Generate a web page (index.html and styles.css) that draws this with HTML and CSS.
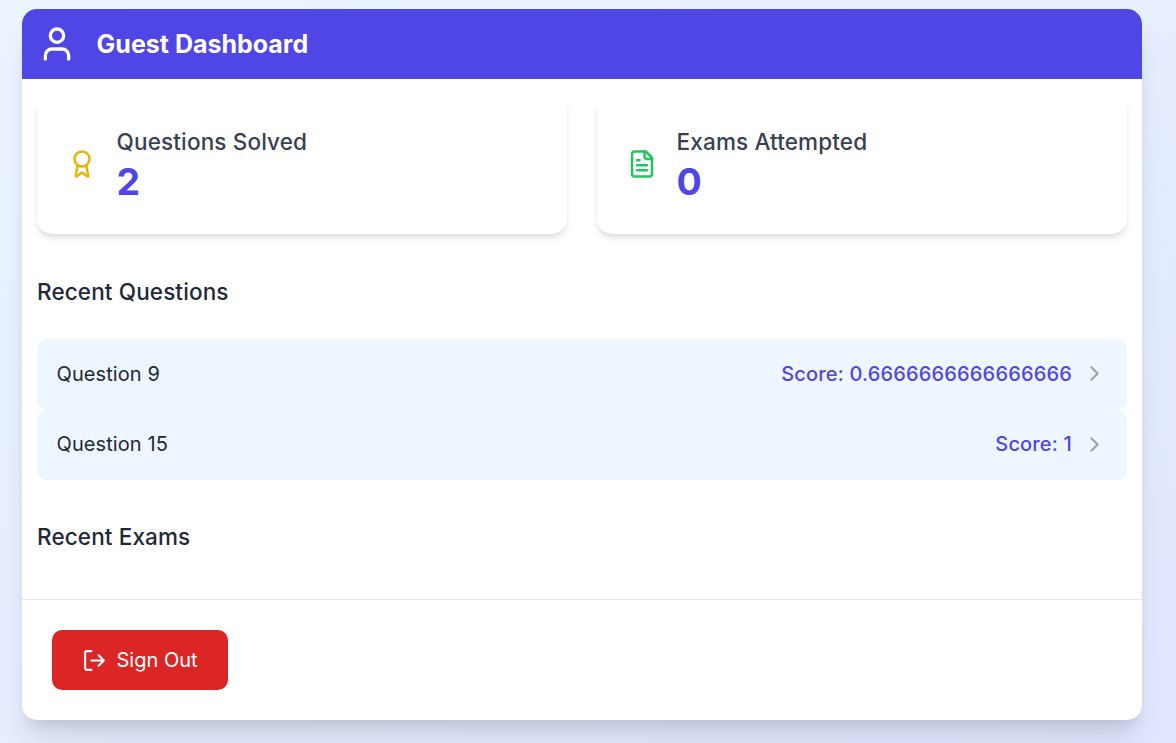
FILE: index.html
```html
<!DOCTYPE html>
<html lang="en">
<head>
<meta charset="utf-8">
<title>Guest Dashboard</title>
<link rel="stylesheet" href="styles.css">
</head>
<body>
<main class="panel">
  <header class="panel-header">
    <svg class="icon icon-user" viewBox="0 0 24 24"><path d="M19 21v-2a4 4 0 0 0-4-4H9a4 4 0 0 0-4 4v2"/><circle cx="12" cy="7" r="4"/></svg>
    <h1 class="title">Guest Dashboard</h1>
  </header>
  <div class="content">
    <section class="stats">
      <div class="stat">
        <svg class="icon icon-award" viewBox="0 0 24 24"><path d="m15.477 12.89 1.515 8.526a.5.5 0 0 1-.81.47l-3.58-2.687a1 1 0 0 0-1.197 0l-3.586 2.686a.5.5 0 0 1-.81-.469l1.514-8.526"/><circle cx="12" cy="8" r="6"/></svg>
        <div>
          <p class="stat-label">Questions Solved</p>
          <p class="stat-value">2</p>
        </div>
      </div>
      <div class="stat">
        <svg class="icon icon-file" viewBox="0 0 24 24"><path d="M15 2H6a2 2 0 0 0-2 2v16a2 2 0 0 0 2 2h12a2 2 0 0 0 2-2V7Z"/><path d="M14 2v4a2 2 0 0 0 2 2h4M10 9H8M16 13H8M16 17H8"/></svg>
        <div>
          <p class="stat-label">Exams Attempted</p>
          <p class="stat-value">0</p>
        </div>
      </div>
    </section>
    <section class="recent">
      <h2 class="section-title">Recent Questions</h2>
      <ul class="list">
        <li class="row">
          <span>Question 9</span>
          <span class="row-end"><span class="score">Score: 0.6666666666666666</span><svg class="icon icon-chevron" viewBox="0 0 24 24"><path d="m9 18 6-6-6-6"/></svg></span>
        </li>
        <li class="row">
          <span>Question 15</span>
          <span class="row-end"><span class="score">Score: 1</span><svg class="icon icon-chevron" viewBox="0 0 24 24"><path d="m9 18 6-6-6-6"/></svg></span>
        </li>
      </ul>
    </section>
    <section class="recent">
      <h2 class="section-title">Recent Exams</h2>
    </section>
  </div>
  <footer class="panel-footer">
    <button class="sign-out"><svg class="icon icon-logout" viewBox="0 0 24 24"><path d="M9 21H5a2 2 0 0 1-2-2V5a2 2 0 0 1 2-2h4"/><path d="m16 17 5-5-5-5M21 12H9"/></svg>Sign Out</button>
  </footer>
</main>
</body>
</html>
```
FILE: styles.css
```css
* { box-sizing: border-box; margin: 0; padding: 0; }
body {
  height: 743px;
  padding: 9px 34px 0 22px;
  overflow: hidden;
  font-family: Inter, "Liberation Sans", sans-serif;
  font-size: 20px;
  line-height: 30px;
  color: #1f2937;
  background: linear-gradient(to bottom right, #ebf4ff, #e0e7ff);
}
.panel {
  height: 711px;
  overflow: hidden;
  background: #fff;
  border-radius: 15px;
  box-shadow: 0 25px 31.25px -6.25px rgba(0,0,0,.1), 0 10px 12.5px -6.25px rgba(0,0,0,.1);
}
.icon { flex: none; fill: none; stroke: currentColor; stroke-width: 2; stroke-linecap: round; stroke-linejoin: round; }
.panel-header {
  display: flex;
  align-items: center;
  gap: 19.6px;
  height: 70px;
  padding: 0 15px;
  color: #fff;
  background: #4f46e5;
}
.icon-user { width: 40px; height: 40px; }
.title { font-size: 25px; line-height: 35px; font-weight: 700; }
.content { height: 520px; padding: 15px; }
.stats { display: grid; grid-template-columns: 1fr 1fr; gap: 30px; }
.stat {
  display: flex;
  align-items: center;
  gap: 19.6px;
  height: 140px;
  padding: 30px;
  background: #fff;
  border-radius: 15px;
  box-shadow: 0 5px 7.5px -1.25px rgba(0,0,0,.1), 0 2.5px 5px -2.5px rgba(0,0,0,.1);
}
.icon-award, .icon-file { width: 30px; height: 30px; }
.icon-award { color: #eab308; }
.icon-file { color: #22c55e; }
.stat-label { font-size: 22.5px; line-height: 35px; font-weight: 500; letter-spacing: .14px; color: #374151; }
.stat-value { font-size: 37.5px; line-height: 45px; font-weight: 700; color: #4f46e5; }
.recent { margin-top: 40px; }
.section-title { font-size: 22.5px; line-height: 35px; font-weight: 500; letter-spacing: .12px; }
.list { margin: 30px 0 -1px; list-style: none; }
.row {
  display: flex;
  align-items: center;
  justify-content: space-between;
  height: 70.5px;
  padding: 0 20px 1px 19.6px;
  background: #eef6ff;
  border-radius: 10px;
  letter-spacing: .08px;
}
.row-end { display: flex; align-items: center; gap: 10px; }
.score { font-weight: 500; letter-spacing: .17px; color: #4f46e5; }
.icon-chevron { width: 25px; height: 25px; color: #9ca3af; }
.panel-footer { height: 121px; padding: 30px; border-top: 1px solid #e5e7eb; }
.sign-out {
  display: flex;
  align-items: center;
  gap: 9.5px;
  width: 176px;
  height: 60px;
  padding: 0 30px;
  border: 0;
  border-radius: 10px;
  font: inherit;
  white-space: nowrap;
  color: #fff;
  background: #dc2626;
}
.icon-logout { width: 25px; height: 25px; }
```
